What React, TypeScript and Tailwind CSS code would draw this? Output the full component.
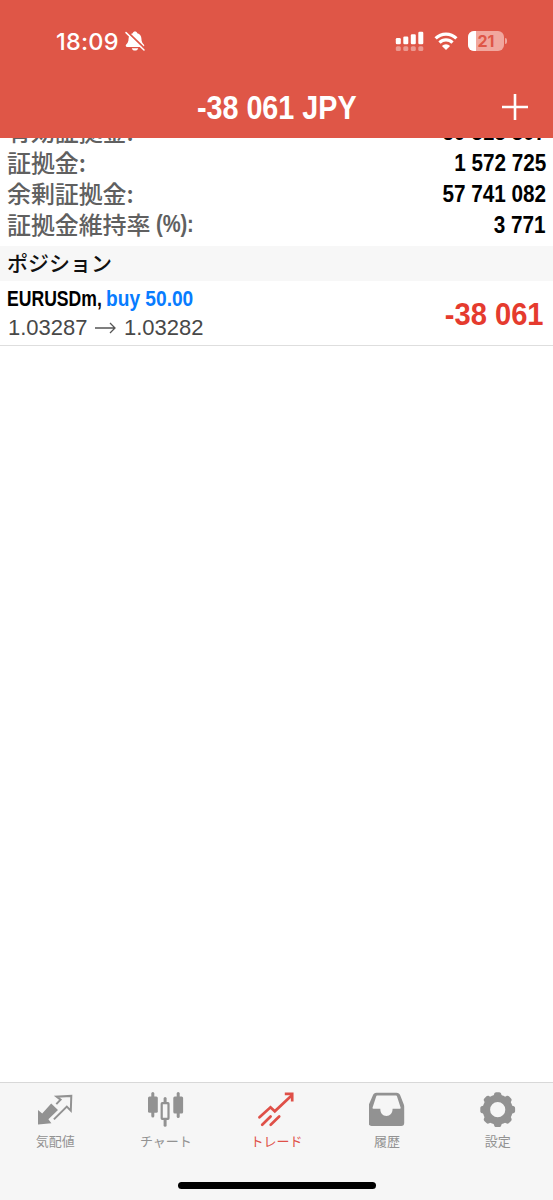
import React from 'react';

const account = [
  { label: '有効証拠金:', value: '59 313 807' },
  { label: '証拠金:', value: '1 572 725' },
  { label: '余剰証拠金:', value: '57 741 082' },
  { label: '証拠金維持率', suffix: '(%):', value: '3 771' },
];

function BellOff() {
  return (
    <svg className="w-[22px] h-[22px]" viewBox="0 0 22 22">
      <path
        d="M11 1.6c-1.200 0-2 .7-2.300 1.600C6 4 4.700 6 4.600 8.600 4.500 12 3.600 13.100 2.200 14.600c-.9 1-.5 2.400.9 2.400h15.800c1.400 0 1.800-1.400.9-2.400-1.400-1.500-2.300-2.600-2.400-6C17.300 6 16 4 13.300 3.200 13 2.300 12.200 1.600 11 1.600zM7.800 18.200c.4 1.500 1.500 2.400 3.200 2.400s2.800-.9 3.200-2.400z"
        fill="#fff"
      />
      <path d="M3.200 1.700 20.900 18.700" stroke="#df5647" strokeWidth="2" />
      <path d="M2 2.600 20 20" stroke="#fff" strokeWidth="1.500" strokeLinecap="round" />
    </svg>
  );
}

function Signal() {
  return (
    <svg className="w-[29px] h-5" viewBox="0 0 29 20" fill="#fff">
      <rect x="0.800" y="7" width="5" height="6.200" rx="1.200" />
      <rect x="8.300" y="5.500" width="5" height="7.700" rx="1.200" />
      <rect x="15.800" y="3.300" width="5" height="9.900" rx="1.200" />
      <rect x="23.300" y="0.800" width="5" height="12.400" rx="1.200" />
      <g opacity="0.4">
        <rect x="0.800" y="15.300" width="5" height="4.700" rx="1.500" />
        <rect x="8.300" y="15.300" width="5" height="4.700" rx="1.500" />
        <rect x="15.800" y="15.300" width="5" height="4.700" rx="1.500" />
        <rect x="23.300" y="15.300" width="5" height="4.700" rx="1.500" />
      </g>
    </svg>
  );
}

function Wifi() {
  return (
    <svg className="w-6 h-[18px]" viewBox="0 0 24 18" fill="none" stroke="#fff" strokeWidth="3.200">
      <path d="M1.600 6.300a14.800 14.800 0 0 1 20.800 0" />
      <path d="M5.500 10.600a9.200 9.200 0 0 1 13 0" />
      <path d="M12 18 7.900 13.900a5.800 5.800 0 0 1 8.200 0z" fill="#fff" stroke="none" />
    </svg>
  );
}

function Battery() {
  return (
    <div className="flex items-center">
      <div className="relative w-[36px] h-5 rounded-[6px] overflow-hidden bg-[#f1a79e]">
        <div className="w-2 h-full bg-white" />
        <span className="absolute inset-0 flex items-center justify-center font-['Inter',sans-serif] font-bold text-[16px] text-[#df5647]">
          21
        </span>
      </div>
      <div className="ml-px w-[2px] h-[6px] rounded-r-full bg-[#f1a79e]" />
    </div>
  );
}

function QuotesIcon() {
  return (
    <svg className="w-9 h-9" viewBox="0 0 36 36">
      <path d="M1 32.500V18l4.200 3.400 9-9.900 6.800 6.600-9.600 9.100 3 4z" fill="#929292" />
      <path
        d="M19.300 12.100l4.300-4.400-4-3L34.300 3.900 33.800 18.600l-4-4L16.900 27.400"
        fill="none"
        stroke="#929292"
        strokeWidth="2"
      />
    </svg>
  );
}

function ChartIcon() {
  return (
    <svg className="w-9 h-9" viewBox="0 0 36 36" fill="#929292">
      <rect x="3.300" y="0" width="3" height="25.500" rx="1.500" />
      <rect x="0" y="4.600" width="9.800" height="16.200" rx="1.500" />
      <rect x="28.700" y="0" width="3" height="26" rx="1.500" />
      <rect x="25.300" y="4.400" width="9.800" height="17" rx="1.500" />
      <rect x="15.600" y="5" width="3" height="29.700" rx="1.500" />
      <rect x="13.700" y="11.200" width="6.800" height="15.600" rx="0.500" fill="#f6f6f6" stroke="#929292" strokeWidth="2.200" />
    </svg>
  );
}

function TradeIcon() {
  return (
    <svg className="w-9 h-9" viewBox="0 0 36 36" fill="none" stroke="#df5048" strokeWidth="2.700">
      <path d="M1.500 25.300 12.500 15.300l4.300 4L33.600 3.400" strokeLinecap="round" />
      <path d="M26.800 1.900h7.400v7.600" />
      <path d="M4.200 32.700 12.600 24.500M12.700 32.700l8.500-8.200" strokeLinecap="round" />
    </svg>
  );
}

function HistoryIcon() {
  return (
    <svg className="w-9 h-9" viewBox="0 0 36 36">
      <path
        fill="#929292"
        fillRule="evenodd"
        d="M7.500.8h20c2 0 3 .8 3.800 2.600l3.500 9c.3.900.4 1.400.4 2.300v16.200c0 2-1 3-3 3H2.500c-2 0-3-1-3-3V14.700c0-.9.100-1.400.4-2.300l3.900-9C4.600 1.600 5.500.8 7.500.8zM8.700 3.600c-1 0-1.400.4-1.700 1.300L3.600 15.400c-.3.900 0 1.400.8 1.400h6.900c0 4.200 2.400 7.200 6.100 7.200s6.200-3 6.200-7.200h7.200c.8 0 1.100-.5.8-1.400L28.200 4.900c-.3-.9-.7-1.300-1.700-1.300z"
      />
    </svg>
  );
}

function SettingsIcon() {
  return (
    <svg className="w-9 h-9" viewBox="0 0 36 36" fill="#929292">
      <circle cx="17.700" cy="17.700" r="11.300" fill="none" stroke="#929292" strokeWidth="7.400" />
      {[0, 45, 90, 135, 180, 225, 270, 315].map((angle) => (
        <path
          key={angle}
          transform={`rotate(${angle} 17.7 17.7)`}
          d="M11.600 5.700c1.600-1 2.100-2.100 2.500-3.500.3-1.200 1-1.900 2.100-1.900h3c1.100 0 1.800.7 2.100 1.900.4 1.400.9 2.500 2.500 3.500z"
        />
      ))}
    </svg>
  );
}

const tabs = [
  { label: '気配値', icon: <QuotesIcon /> },
  { label: 'チャート', icon: <ChartIcon /> },
  { label: 'トレード', icon: <TradeIcon />, active: true },
  { label: '履歴', icon: <HistoryIcon /> },
  { label: '設定', icon: <SettingsIcon /> },
];

export default function App() {
  return (
    <div className="flex flex-col w-[553px] h-[1200px] overflow-hidden bg-white font-['Liberation_Sans','Noto_Sans_CJK_JP',sans-serif]">
      <header className="h-[138px] shrink-0 bg-[#df5647] text-white">
        <div className="flex items-center justify-between h-[82px] pl-[56px] pr-[46px]">
          <div className="flex items-center gap-1">
            <span className="w-[64px] pt-px font-['Inter',sans-serif] font-medium text-[23.5px] tracking-[0.2px]">18:09</span>
            <BellOff />
          </div>
          <div className="flex items-center gap-[10px]">
            <Signal />
            <Wifi />
            <Battery />
          </div>
        </div>
        <div className="grid grid-cols-[1fr_auto_1fr] items-center h-[50px]">
          <h1 className="col-start-2 scale-x-[0.87] font-bold text-[33px] leading-none whitespace-nowrap">-38 061 JPY</h1>
          <svg className="justify-self-end mr-[25px] w-[26px] h-[26px]" viewBox="0 0 26 26" stroke="#fff" strokeWidth="2.600">
            <path d="M13 0v26M0 13h26" />
          </svg>
        </div>
      </header>

      <main className="flex-1 overflow-hidden">
        <div className="-mt-[22px] pb-[6px] px-[7px]">
          {account.map((row) => (
            <div key={row.label} className="flex items-center justify-between h-[31px]">
              <span className="flex items-center pb-px font-['Noto_Sans_CJK_JP',sans-serif] font-medium text-[24px] leading-none tracking-[-0.1px] text-[#606060]">
                {row.label}
                {row.suffix && (
                  <span className="ml-[6px] origin-left scale-x-[0.84] font-['Liberation_Sans',sans-serif] font-bold">{row.suffix}</span>
                )}
              </span>
              <span className="origin-right scale-x-[0.9] pt-[2px] font-bold text-[23px] leading-none">{row.value}</span>
            </div>
          ))}
        </div>

        <div className="flex items-center h-[35px] pl-[7px] pb-[2px] bg-[#f7f7f7]">
          <h2 className="font-['Noto_Sans_CJK_JP',sans-serif] font-medium text-[21px] leading-none text-[#111]">ポジション</h2>
        </div>

        <div className="flex items-center justify-between h-[65px] pl-[7px] pr-[9px] border-b border-[#dedede]">
          <div>
            <div className="flex h-[29px] items-center font-bold text-[22px] leading-none">
              <span className="w-[99px] origin-left scale-x-[0.8]">EURUSDm,</span>
              <span className="origin-left scale-x-[0.87] whitespace-nowrap text-[#087cff]">buy 50.00</span>
            </div>
            <div className="flex items-center h-[29px] text-[22px] leading-none text-[#484848]">
              <span className="w-[80px] pl-px">1.03287</span>
              <svg className="mx-[8px] w-[21px] h-3" viewBox="0 0 21 12" fill="none" stroke="#555" strokeWidth="1.300">
                <path d="M0 6h20M15 1l5 5-5 5" />
              </svg>
              <span>1.03282</span>
            </div>
          </div>
          <span className="origin-right scale-x-[0.91] pt-[2px] font-bold text-[32px] leading-none text-[#e53b2e]">-38 061</span>
        </div>
      </main>

      <footer className="h-[118px] shrink-0 border-t border-[#d8d8d8] bg-[#f6f6f6]">
        <nav className="grid grid-cols-5 h-[99px] pt-[9px]">
          {tabs.map((tab) => (
            <div
              key={tab.label}
              className={`flex flex-col items-center gap-[6px] font-['Noto_Sans_CJK_JP',sans-serif] text-[13px] leading-[14px] ${
                tab.active ? 'text-[#df5048]' : 'text-[#929292]'
              }`}
            >
              {tab.icon}
              <span>{tab.label}</span>
            </div>
          ))}
        </nav>
        <div className="mx-auto w-[198px] h-[7px] rounded-full bg-black" />
      </footer>
    </div>
  );
}
